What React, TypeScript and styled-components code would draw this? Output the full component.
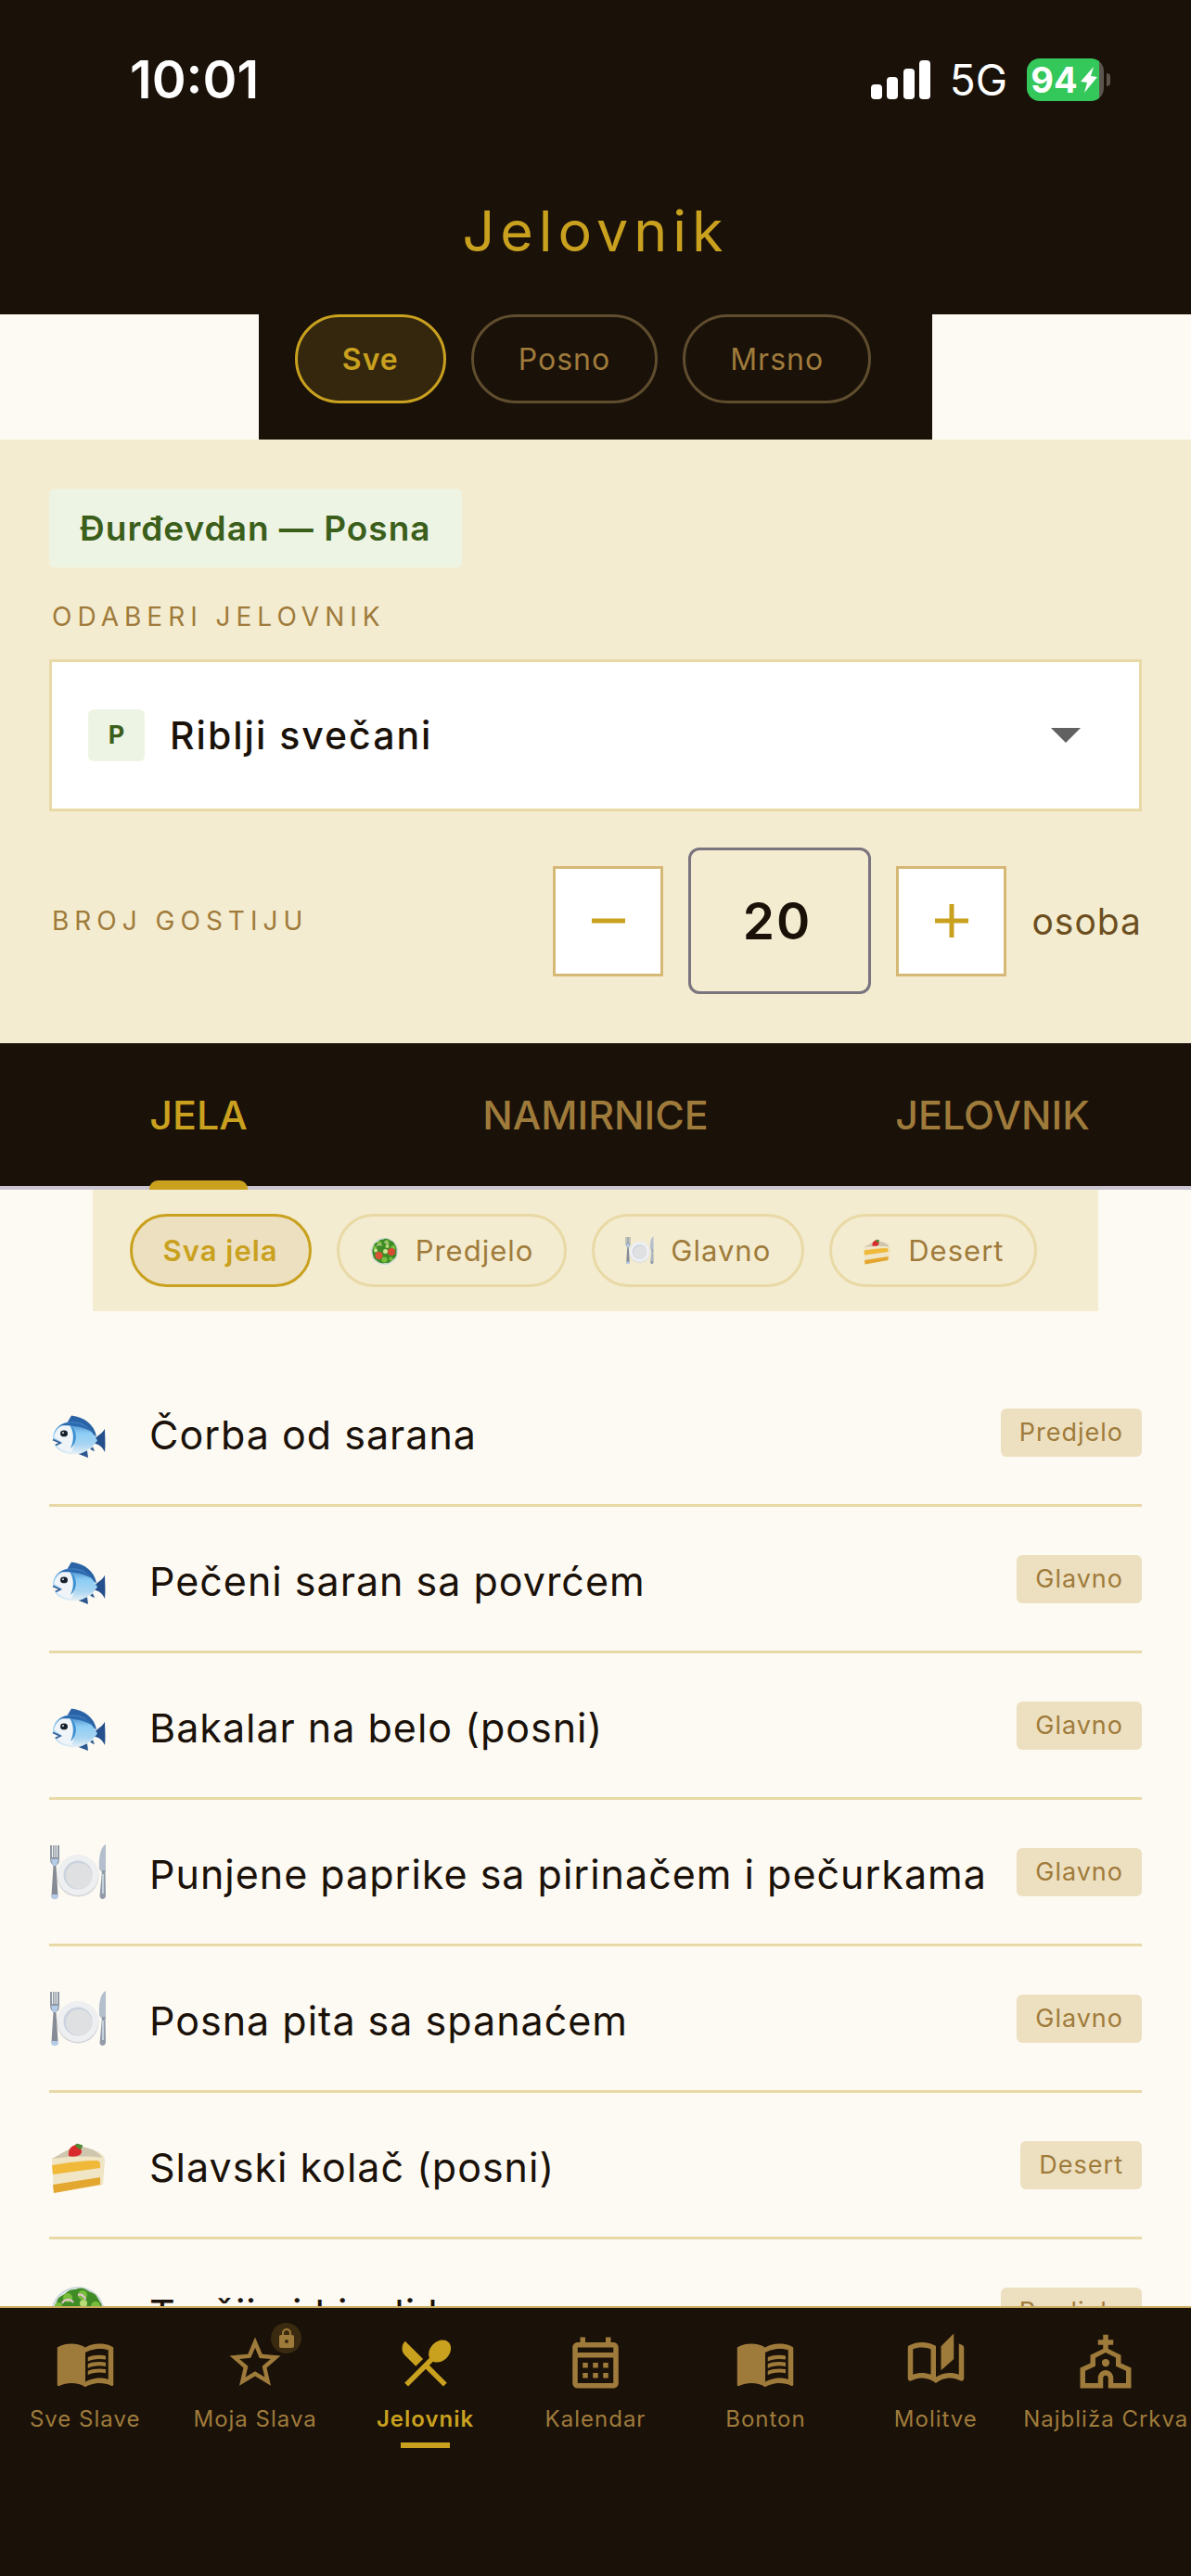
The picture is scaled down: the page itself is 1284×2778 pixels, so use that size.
import { FC, useState } from 'react';
import styled, { createGlobalStyle } from 'styled-components';
import {
  MdLocalDining,
  MdLock,
  MdMenuBook,
  MdOutlineAutoStories,
  MdOutlineCalendarMonth,
  MdOutlineChurch,
  MdStarBorder,
} from 'react-icons/md';

const COLOR = {
  DARK: '#1a1109',
  GOLD: '#c9a11f',
  BRONZE: '#9f7b3b',
  CREAM: '#f4ecd0',
  PAPER: '#fdfaf3',
  SAND: '#ede0c0',
  LINE: '#e8d9a6',
  GREEN: '#3b5f1b',
  MINT: '#eef4e4',
};

type Kind = 'fish' | 'plate' | 'cake' | 'salad';

const DIETS = ['Sve', 'Posno', 'Mrsno'];
const TABS = ['JELA', 'NAMIRNICE', 'JELOVNIK'];

const COURSES: { label: string; kind?: Kind }[] = [
  { label: 'Sva jela' },
  { label: 'Predjelo', kind: 'salad' },
  { label: 'Glavno', kind: 'plate' },
  { label: 'Desert', kind: 'cake' },
];

const DISHES: { name: string; course: string; kind: Kind }[] = [
  { name: 'Čorba od sarana', course: 'Predjelo', kind: 'fish' },
  { name: 'Pečeni saran sa povrćem', course: 'Glavno', kind: 'fish' },
  { name: 'Bakalar na belo (posni)', course: 'Glavno', kind: 'fish' },
  { name: 'Punjene paprike sa pirinačem i pečurkama', course: 'Glavno', kind: 'plate' },
  { name: 'Posna pita sa spanaćem', course: 'Glavno', kind: 'plate' },
  { name: 'Slavski kolač (posni)', course: 'Desert', kind: 'cake' },
  { name: 'Turšija i kiseli kupus', course: 'Predjelo', kind: 'salad' },
];

const NAV = [
  { label: 'Sve Slave', Icon: MdMenuBook },
  { label: 'Moja Slava', Icon: MdStarBorder, locked: true },
  { label: 'Jelovnik', Icon: MdLocalDining, current: true },
  { label: 'Kalendar', Icon: MdOutlineCalendarMonth },
  { label: 'Bonton', Icon: MdMenuBook },
  { label: 'Molitve', Icon: MdOutlineAutoStories },
  { label: 'Najbliža Crkva', Icon: MdOutlineChurch },
];

const Fish: FC = () => (
  <g transform="translate(0 5) scale(1 0.84)">
    <defs>
      <linearGradient id="fishBody" x1="0" y1="0" x2="0" y2="1">
        <stop offset="0" stopColor="#3f80c4" />
        <stop offset="0.35" stopColor="#8ccdf5" />
        <stop offset="0.7" stopColor="#a9d5f2" />
        <stop offset="1" stopColor="#eaf2f6" />
      </linearGradient>
    </defs>
    <path d="M19 19 L24 9 C38 11 49 21 51 36 L38 28 Z" fill="#2a63a5" />
    <path d="M48 39 C53 35 58 31 60 26 C60 35 61 46 60 56 C58 50 53 45 48 45 Z" fill="#244f8c" />
    <path d="M29 57 L42 63 L41 54 Z M44 52 L49 55 L47 49 Z" fill="#2c578f" />
    <path
      d="M4 37 C5 24 14 17 25 17 C38 17 46 28 52 41 C46 51 36 60 24 59 C14 57 7 52 6 46 L12 44 L5 41 Z"
      fill="url(#fishBody)"
    />
    <path d="M5 37 C7 25 14 20 22 20 C29 28 29 46 24 56 C15 55 9 51 7 46 L13 43 Z" fill="#eef4f8" />
    <path d="M11 22 C24 14 40 20 46 30 C36 23 23 21 11 22 Z" fill="#2c6ab0" />
    <path d="M22 21 C31 27 31 44 23 51 C27 41 27 30 22 21 Z" fill="#3d8fd0" />
    <path d="M4 40 L12 44 L7 47" fill="none" stroke="#345f96" strokeWidth="2" />
    <circle cx="16" cy="32" r="4" fill="#16202c" />
    <circle cx="15" cy="31" r="1" fill="#fff" />
  </g>
);

const Plate: FC = () => (
  <>
    <circle cx="31" cy="35" r="22.5" fill="#d3d5d8" />
    <circle cx="31" cy="34" r="22" fill="#eeeff1" />
    <circle cx="31" cy="34" r="15.5" fill="#cbd3de" />
    <circle cx="32" cy="35" r="14" fill="#dfe0e2" />
    <path d="M1 2 V16 C1 21 3 23 5 24 H7 C10 23 11 21 11 16 V2 L9 2 V15 H8 V2 H6.500 V15 H5.500 V2 H4 V15 H3 V2 Z" fill="#8f99a6" />
    <path d="M4.500 24 H7.500 L9.500 56 C10 61 2 61 2.500 56 Z" fill="#858c95" />
    <path d="M2.500 55 H9.500 V58 C9 61 3 61 2.500 58 Z M2 17 H10 L8 24 H4 Z" fill="#b4cbe8" />
    <path d="M61 1 C56 3 53 13 54 28 L57 31 H61 Z" fill="#b3bfcd" />
    <path d="M57 29 H60.500 L61 57 C60 61 55 61 54.500 57 Z" fill="#929ba7" />
    <path d="M58 33 V54" stroke="#d4e0ee" strokeWidth="1.5" />
  </>
);

const Cake: FC = () => (
  <>
    <path d="M3 24 L28 11 C45 12 60 17 60 26 L58 52 L5 61 Z" fill="#f0e5c5" />
    <path d="M3 24 L28 10 C42 11 54 16 57 23 C40 20 20 22 3 24 Z" fill="#cfc6ae" />
    <path d="M3 31 C20 28 38 26 52 26 C56 27 55 31 55 34 L4 41 Z" fill="#f0b93a" />
    <path d="M4 52 L55 44 V52 L5 61 Z" fill="#e3a72f" />
    <path d="M21 21 C20 14 24 9 30 9 C36 13 36 18 33 20 C29 22 25 22 21 21 Z" fill="#d92b2b" />
    <path d="M28 9 C30 6 33 9 36 9 C36 14 33 15 30 12 Z" fill="#4f8a35" />
  </>
);

const Salad: FC = () => (
  <>
    <circle cx="31" cy="33" r="29" fill="#cfd8de" />
    <circle cx="31" cy="33" r="27" fill="#eef1f3" />
    <path
      d="M31 6 C37 4 41 8 45 10 C52 12 52 17 56 22 C58 28 57 34 57 39 C57 46 50 50 46 54 C40 60 34 58 29 59 C22 59 17 56 13 52 C6 48 7 42 5 37 C4 30 5 26 8 21 C9 14 15 14 19 10 C23 6 27 8 31 6 Z"
      fill="#3f8c27"
    />
    <g fill="#79bd3c">
      <circle cx="20" cy="16" r="5" />
      <circle cx="36" cy="13" r="5" />
      <circle cx="50" cy="25" r="5" />
      <circle cx="10" cy="25" r="4" />
      <circle cx="31" cy="51" r="6" />
      <circle cx="45" cy="49" r="4" />
    </g>
    <path d="M14 22 A7 7 0 0 1 26 21 M31 13 A6 6 0 0 1 39 18" fill="none" stroke="#ecc4d4" strokeWidth="2" />
    <circle cx="19" cy="42" r="8" fill="#dd5136" />
    <circle cx="46" cy="34" r="8" fill="#d94a33" />
    <circle cx="33" cy="33" r="5" fill="#cfe594" />
    <circle cx="12" cy="31" r="4" fill="#cfe594" />
    <circle cx="37" cy="22" r="4" fill="#b9dc76" />
  </>
);

const DRAWINGS: Record<Kind, FC> = { fish: Fish, plate: Plate, cake: Cake, salad: Salad };

const FoodIcon: FC<{ kind: Kind; size: number }> = ({ kind, size }) => {
  const Drawing = DRAWINGS[kind];
  return (
    <FoodSvg viewBox="0 0 62 62" width={size} height={size} aria-hidden>
      <Drawing />
    </FoodSvg>
  );
};

const App: FC = () => {
  const [diet, setDiet] = useState('Sve');
  const [tab, setTab] = useState('JELA');
  const [course, setCourse] = useState('Sva jela');
  const [guests, setGuests] = useState(20);

  const dishes = course === 'Sva jela' ? DISHES : DISHES.filter((d) => d.course === course);

  return (
    <Screen>
      <GlobalStyle />
      <Header>
        <StatusBar>
          <Clock>10:01</Clock>
          <Status>
            <svg width="64" height="42" viewBox="0 0 64 42" fill="#fff" aria-hidden>
              <rect x="0" y="26" width="12" height="16" rx="4" />
              <rect x="17" y="18" width="12" height="24" rx="4" />
              <rect x="35" y="9" width="12" height="33" rx="4" />
              <rect x="52" y="0" width="12" height="42" rx="4" />
            </svg>
            <Network>5G</Network>
            <Battery>
              <BatteryBody>
                94
                <svg width="18" height="28" viewBox="0 0 18 28" fill="#fff" aria-hidden>
                  <path d="M14 0 L0 16 L7 17 L4 28 L18 11 L11 10 Z" />
                </svg>
              </BatteryBody>
              <BatteryCap />
            </Battery>
          </Status>
        </StatusBar>
        <Title>Jelovnik</Title>
      </Header>

      <DietFilter>
        {DIETS.map((d) => (
          <DietChip key={d} $active={d === diet} aria-pressed={d === diet} onClick={() => setDiet(d)}>
            {d}
          </DietChip>
        ))}
      </DietFilter>

      <Panel>
        <Occasion>Đurđevdan — Posna</Occasion>
        <Label htmlFor="menu">ODABERI JELOVNIK</Label>
        <SelectBox>
          <FastMark>P</FastMark>
          <Select id="menu" defaultValue="Riblji svečani">
            <option>Riblji svečani</option>
          </Select>
          <Arrow width="32" height="16" viewBox="0 0 32 16" aria-hidden>
            <path d="M0 0 H32 L16 16 Z" fill="#616161" />
          </Arrow>
        </SelectBox>
        <Guests>
          <Label htmlFor="guests">BROJ GOSTIJU</Label>
          <Stepper>
            <StepButton aria-label="Manje" onClick={() => setGuests(Math.max(1, guests - 1))}>
              <svg width="36" height="36" viewBox="0 0 36 36" aria-hidden>
                <path d="M0 18 H36" stroke="currentColor" strokeWidth="5" />
              </svg>
            </StepButton>
            <GuestInput
              id="guests"
              inputMode="numeric"
              value={guests}
              onChange={(e) => setGuests(Number(e.target.value) || 0)}
            />
            <StepButton aria-label="Više" onClick={() => setGuests(guests + 1)}>
              <svg width="36" height="36" viewBox="0 0 36 36" aria-hidden>
                <path d="M0 18 H36 M18 0 V36" stroke="currentColor" strokeWidth="5" />
              </svg>
            </StepButton>
            <Unit>osoba</Unit>
          </Stepper>
        </Guests>
      </Panel>

      <Tabs role="tablist">
        {TABS.map((t) => (
          <Tab key={t} role="tab" $active={t === tab} aria-selected={t === tab} onClick={() => setTab(t)}>
            <TabLabel $active={t === tab}>{t}</TabLabel>
          </Tab>
        ))}
      </Tabs>

      <CourseFilter>
        {COURSES.map(({ label, kind }) => (
          <CourseChip
            key={label}
            $active={label === course}
            aria-pressed={label === course}
            onClick={() => setCourse(label)}
          >
            {kind && <FoodIcon kind={kind} size={31} />}
            {label}
          </CourseChip>
        ))}
      </CourseFilter>

      <DishList>
        {dishes.map((dish) => (
          <Dish key={dish.name}>
            <FoodIcon kind={dish.kind} size={62} />
            <DishName>{dish.name}</DishName>
            <CourseTag>{dish.course}</CourseTag>
          </Dish>
        ))}
      </DishList>

      <Nav>
        {NAV.map(({ label, Icon, locked, current }) => (
          <NavLink key={label} href="#" $active={current} aria-current={current ? 'page' : undefined}>
            <NavIcon>
              <Icon size={66} />
              {locked && (
                <LockBadge>
                  <MdLock size={24} />
                </LockBadge>
              )}
            </NavIcon>
            <NavLabel $active={current}>{label}</NavLabel>
            {current && <NavMark />}
          </NavLink>
        ))}
      </Nav>
    </Screen>
  );
};

export default App;

const GlobalStyle = createGlobalStyle`
  * {
    box-sizing: border-box;
  }

  body {
    margin: 0;
    background: ${COLOR.PAPER};
  }

  body, button, input, select {
    font-family: Inter, 'Liberation Sans', sans-serif;
  }

  button {
    cursor: pointer;
  }
`;

const Screen = styled.div`
  display: flex;
  flex-direction: column;
  height: 100vh;
  overflow: hidden;
  background: ${COLOR.PAPER};
`;

const Header = styled.header`
  flex: none;
  background: ${COLOR.DARK};
`;

const StatusBar = styled.div`
  display: flex;
  justify-content: space-between;
  align-items: center;
  height: 159px;
  padding: 12px 87px 0 140px;
  color: #fff;
`;

const Clock = styled.span`
  font-size: 56px;
  font-weight: 600;
`;

const Status = styled.div`
  display: flex;
  align-items: center;
  gap: 21px;
`;

const Network = styled.span`
  font-size: 46px;
`;

const Battery = styled.div`
  display: flex;
  align-items: center;
  gap: 3px;
`;

const BatteryBody = styled.div`
  display: flex;
  align-items: center;
  justify-content: center;
  gap: 3px;
  width: 83px;
  height: 46px;
  padding-right: 3px;
  border-radius: 14px;
  background: linear-gradient(to right, #34c759 94%, #5b554e 94%);
  font-size: 38px;
  font-weight: 700;
`;

const BatteryCap = styled.div`
  width: 4px;
  height: 14px;
  border-radius: 0 4px 4px 0;
  background: #5b554e;
`;

const Title = styled.h1`
  margin: 0;
  color: ${COLOR.GOLD};
  font-size: 61px;
  font-weight: 400;
  letter-spacing: 6px;
  line-height: 180px;
  text-align: center;
`;

const DietFilter = styled.div`
  display: flex;
  flex: none;
  align-self: center;
  gap: 27px;
  padding: 0 66px 39px 39px;
  background: ${COLOR.DARK};
`;

const DietChip = styled.button<{ $active: boolean }>`
  height: 96px;
  padding: 0 48px;
  border: 3px solid ${({ $active }) => ($active ? COLOR.GOLD : '#5f4d2e')};
  border-radius: 48px;
  background: ${({ $active }) => ($active ? '#35270e' : 'transparent')};
  color: ${({ $active }) => ($active ? COLOR.GOLD : COLOR.BRONZE)};
  font-size: 32px;
  font-weight: ${({ $active }) => ($active ? 600 : 400)};
  letter-spacing: 1px;
`;

const Panel = styled.section`
  display: flex;
  flex: none;
  flex-direction: column;
  align-items: flex-start;
  padding: 53px;
  background: ${COLOR.CREAM};
`;

const Occasion = styled.div`
  margin-bottom: 35px;
  padding: 0 33px;
  border-radius: 6px;
  background: ${COLOR.MINT};
  color: ${COLOR.GREEN};
  font-size: 37px;
  font-weight: 600;
  letter-spacing: 1px;
  line-height: 85px;
`;

const Label = styled.label`
  padding-left: 3px;
  color: ${COLOR.BRONZE};
  font-size: 28px;
  letter-spacing: 6px;
  line-height: 36px;
`;

const SelectBox = styled.div`
  display: flex;
  align-items: center;
  align-self: stretch;
  height: 164px;
  margin: 28px 0 39px;
  padding: 0 63px 0 39px;
  border: 3px solid ${COLOR.LINE};
  background: #fff;
`;

const FastMark = styled.span`
  flex: none;
  width: 61px;
  margin-right: 27px;
  border-radius: 6px;
  background: ${COLOR.MINT};
  color: ${COLOR.GREEN};
  font-size: 27px;
  font-weight: 700;
  line-height: 56px;
  text-align: center;
`;

const Select = styled.select`
  flex: 1;
  min-width: 0;
  height: 100%;
  padding: 0;
  border: 0;
  appearance: none;
  outline: none;
  background: transparent;
  color: ${COLOR.DARK};
  font-size: 41px;
  font-weight: 500;
  letter-spacing: 2px;
`;

const Arrow = styled.svg`
  flex: none;
  pointer-events: none;
`;

const Guests = styled.div`
  display: flex;
  justify-content: space-between;
  align-items: center;
  align-self: stretch;
`;

const Stepper = styled.div`
  display: flex;
  align-items: center;
  gap: 27px;
`;

const StepButton = styled.button`
  display: flex;
  justify-content: center;
  align-items: center;
  width: 119px;
  height: 119px;
  padding: 0;
  border: 3px solid #d6b876;
  background: #fff;
  color: ${COLOR.GOLD};
`;

const GuestInput = styled.input`
  width: 197px;
  height: 158px;
  padding: 0 6px 0 0;
  border: 3px solid #79747e;
  border-radius: 12px;
  outline: none;
  background: transparent;
  color: ${COLOR.DARK};
  font-size: 55px;
  font-weight: 600;
  letter-spacing: 2px;
  text-align: center;
`;

const Unit = styled.span`
  color: #6c4f20;
  font-size: 39px;
  letter-spacing: 1px;
`;

const Tabs = styled.div`
  display: grid;
  flex: none;
  grid-template-columns: repeat(3, 1fr);
  height: 158px;
  background: ${COLOR.DARK};
  box-shadow: inset 0 -4px #cac4d0;
`;

const Tab = styled.button<{ $active: boolean }>`
  display: flex;
  justify-content: center;
  padding: 0;
  border: 0;
  background: transparent;
  color: ${({ $active }) => ($active ? COLOR.GOLD : COLOR.BRONZE)};
  font-size: 43px;
  font-weight: 500;
`;

const TabLabel = styled.span<{ $active: boolean }>`
  position: relative;
  height: 158px;
  line-height: 154px;

  &::after {
    content: '';
    display: ${({ $active }) => ($active ? 'block' : 'none')};
    position: absolute;
    right: 0;
    bottom: 0;
    left: 0;
    height: 10px;
    border-radius: 9px 9px 0 0;
    background: ${COLOR.GOLD};
  }
`;

const CourseFilter = styled.div`
  display: flex;
  flex: none;
  align-self: center;
  gap: 27px;
  padding: 26px 66px 26px 40px;
  background: ${COLOR.CREAM};
`;

const CourseChip = styled.button<{ $active: boolean }>`
  display: flex;
  align-items: center;
  gap: 18px;
  height: 79px;
  padding: 0 33px;
  border: 3px solid ${({ $active }) => ($active ? COLOR.GOLD : COLOR.LINE)};
  border-radius: 40px;
  background: ${({ $active }) => ($active ? COLOR.SAND : 'transparent')};
  color: ${({ $active }) => ($active ? COLOR.GOLD : COLOR.BRONZE)};
  font-size: 31px;
  font-weight: ${({ $active }) => ($active ? 600 : 400)};
  letter-spacing: 1px;
`;

const FoodSvg = styled.svg`
  flex: none;
`;

const DishList = styled.ul`
  flex: 1;
  min-height: 0;
  margin: 0;
  padding: 53px 53px 0;
  overflow: hidden;
  list-style: none;
`;

const Dish = styled.li`
  display: flex;
  align-items: center;
  height: 158px;
  border-bottom: 3px solid ${COLOR.LINE};
`;

const DishName = styled.span`
  flex: 1;
  padding: 4px 0 0 46px;
  color: ${COLOR.DARK};
  font-size: 43px;
  letter-spacing: 1px;
  white-space: nowrap;
`;

const CourseTag = styled.span`
  padding: 0 20px;
  border-radius: 6px;
  background: ${COLOR.SAND};
  color: ${COLOR.BRONZE};
  font-size: 27px;
  letter-spacing: 1px;
  line-height: 52px;
`;

const Nav = styled.nav`
  display: grid;
  flex: none;
  grid-template-columns: repeat(7, minmax(0, 1fr));
  padding-bottom: 120px;
  border-top: 2px solid #c8aa5a;
  background: ${COLOR.DARK};
`;

const NavLink = styled.a<{ $active?: boolean }>`
  display: flex;
  flex-direction: column;
  align-items: center;
  height: 169px;
  padding-top: 26px;
  color: ${({ $active }) => ($active ? COLOR.GOLD : COLOR.BRONZE)};
  text-decoration: none;
`;

const NavIcon = styled.span`
  display: flex;
  position: relative;
`;

const LockBadge = styled.span`
  display: flex;
  justify-content: center;
  align-items: center;
  position: absolute;
  top: -10px;
  right: -17px;
  width: 33px;
  height: 33px;
  border-radius: 50%;
  background: #3a2a10;
`;

const NavLabel = styled.span<{ $active?: boolean }>`
  margin: 13px 0 10px;
  font-size: 24px;
  font-weight: ${({ $active }) => ($active ? 600 : 400)};
  letter-spacing: 1px;
  line-height: 30px;
  white-space: nowrap;
`;

const NavMark = styled.span`
  width: 53px;
  height: 6px;
  background: ${COLOR.GOLD};
`;
